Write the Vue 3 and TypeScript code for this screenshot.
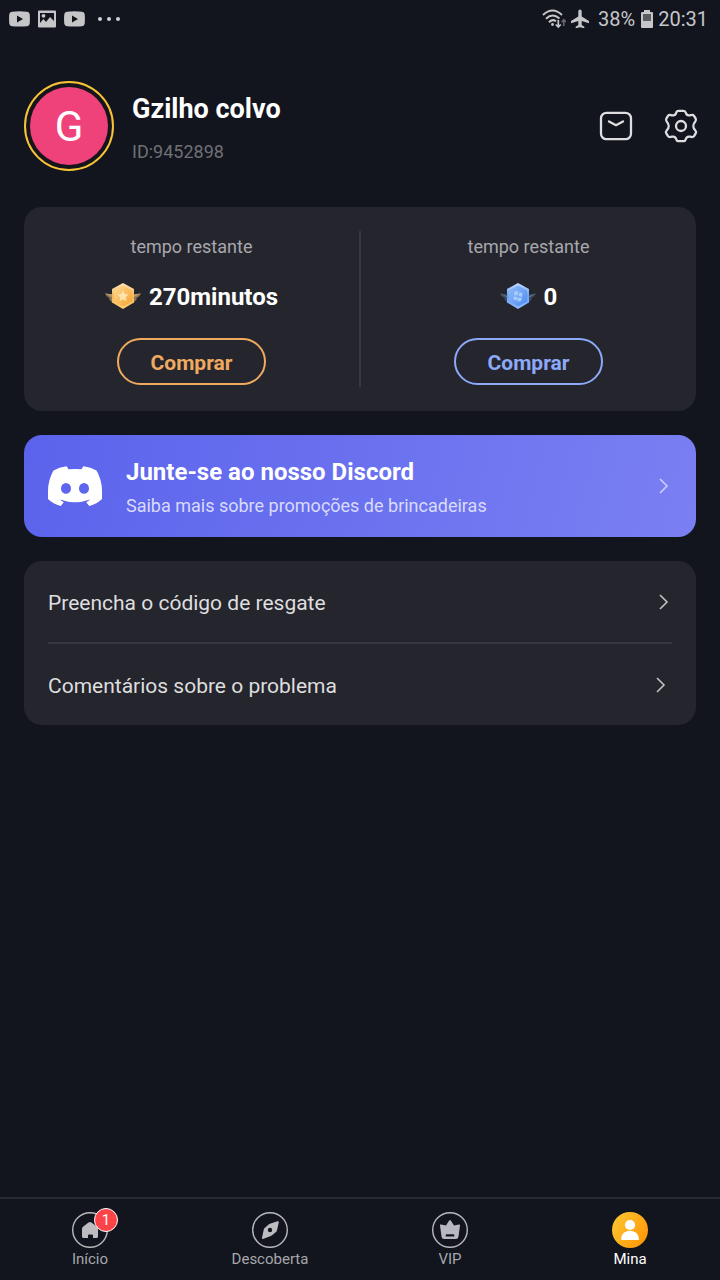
<script setup lang="ts">
interface Balance {
  id: string
  amount: string
  tone: 'gold' | 'blue'
}
interface Tab {
  id: 'home' | 'discover' | 'vip' | 'mine'
  label: string
  badge?: number
}

const balances: Balance[] = [
  { id: 'minutes', amount: '270minutos', tone: 'gold' },
  { id: 'credits', amount: '0', tone: 'blue' },
]

const tabs: Tab[] = [
  { id: 'home', label: 'Início', badge: 1 },
  { id: 'discover', label: 'Descoberta' },
  { id: 'vip', label: 'VIP' },
  { id: 'mine', label: 'Mina' },
]
const activeTab: Tab['id'] = 'mine'
</script>

<template>
  <div class="screen">
    <div class="status">
      <div class="status-left">
        <svg width="21" height="16" viewBox="0 0 21 16"><path fill="#c6c6c9" fill-rule="evenodd" d="M3 .7Q10.500 0 18 .7q2.500.2 2.700 2.500.4 4.800 0 9.500-.3 2.300-2.700 2.500-7.500.6-15 0Q.6 15 .3 12.700q-.5-4.700 0-9.500Q.5 1 3 .7zM8 4.500v7l6-3.500z" /></svg>
        <svg width="18" height="18" viewBox="0 0 18 18"><path fill="#c6c6c9" fill-rule="evenodd" d="M1 .5h16a1 1 0 0 1 1 1v15a1 1 0 0 1-1 1H1a1 1 0 0 1-1-1v-15a1 1 0 0 1 1-1zM2 3v10l3.500-4 2.500 3 4-5 4 4V3z" /><circle cx="5.500" cy="5.800" r="1.900" fill="#c6c6c9" /></svg>
        <svg width="21" height="16" viewBox="0 0 21 16"><path fill="#c6c6c9" fill-rule="evenodd" d="M3 .7Q10.500 0 18 .7q2.500.2 2.700 2.500.4 4.800 0 9.500-.3 2.300-2.700 2.500-7.500.6-15 0Q.6 15 .3 12.700q-.5-4.700 0-9.500Q.5 1 3 .7zM8 4.500v7l6-3.500z" /></svg>
        <svg class="more" width="24" height="6" viewBox="0 0 24 6" fill="#d0d0d3"><circle cx="3" cy="3" r="2" /><circle cx="12" cy="3" r="2" /><circle cx="21" cy="3" r="2" /></svg>
      </div>
      <div class="status-right">
        <svg width="24" height="20" viewBox="0 0 24 20" fill="none" stroke="#c6c6c9" stroke-width="2">
          <path d="M1 6Q10.500-3 20 6M4 9.700Q10.500 3.500 17.500 9.500M7 13.200q3.500-3.500 7-1" />
          <circle cx="10.500" cy="15.500" r="1.400" fill="#c6c6c9" stroke="none" />
          <path d="M16.300 11v7M13.800 15.500l2.500 2.500 2.500-2.500" stroke-width="1.700" />
          <path d="M21.800 17v-6M19.700 13l2.100-2.200 2.100 2.200" stroke="#65656a" stroke-width="1.700" />
        </svg>
        <svg width="20" height="20" viewBox="0 0 20 20"><path fill="#c6c6c9" d="M10 .5q1.600 0 1.700 2v5l7.300 4.500v2.300L11.700 12v4l2.600 1.700v1.500L10 18.200l-4.300 1v-1.500L8.300 16v-4L1 14.300V12l7.300-4.500v-5Q8.400.5 10 .5z" /></svg>
        <span class="pct">38%</span>
        <svg class="battery" width="12" height="18" viewBox="0 0 12 18"><path fill="#c6c6c9" d="M3 0h6v2h2a1 1 0 0 1 1 1v14a1 1 0 0 1-1 1H1a1 1 0 0 1-1-1V3a1 1 0 0 1 1-1h2z" /><path fill="#5b5b62" d="M2 4h8v7H2z" /></svg>
        <span>20:31</span>
      </div>
    </div>

    <header class="profile">
      <div class="avatar"><span>G</span></div>
      <div class="who">
        <h1>Gzilho colvo</h1>
        <p>ID:9452898</p>
      </div>
      <button class="icon-btn" type="button" aria-label="Mensagens">
        <svg width="34" height="34" viewBox="0 0 34 34" fill="none" stroke="#dedee0" stroke-width="2.300" stroke-linecap="round" stroke-linejoin="round"><rect x="2" y="3.800" width="30" height="26.400" rx="5.500" /><path d="M10 12.400l7 3.800 7-3.800" /></svg>
      </button>
      <button class="icon-btn" type="button" aria-label="Configurações">
        <svg width="34" height="34" viewBox="0 0 34 34" fill="none" stroke="#dedee0" stroke-width="2.300" stroke-linejoin="round">
          <path d="M14.500 1.900H19.500Q21.300 1.900 21.800 3.800Q22.600 7 26 6.300Q29 5.300 30 6.800L31.700 9.700Q32.500 11.300 31.200 12.700C28.700 15.300 28.700 18.700 31.200 21.300Q32.500 22.700 31.700 24.300L30 27.200Q29 28.700 26 27.700Q22.600 27 21.800 30.200Q21.300 32.100 19.500 32.100H14.500Q12.700 32.100 12.200 30.200Q11.400 27 8 27.700Q5 28.700 4 27.200L2.300 24.300Q1.500 22.700 2.800 21.300C5.300 18.700 5.300 15.300 2.800 12.700Q1.500 11.300 2.300 9.700L4 6.800Q5 5.300 8 6.300Q11.400 7 12.200 3.800Q12.700 1.900 14.500 1.900Z" />
          <circle cx="17" cy="17" r="5" />
        </svg>
      </button>
    </header>

    <main>
      <section class="balances">
        <div v-for="b in balances" :key="b.id" class="balance" :class="b.tone">
          <p class="caption">tempo restante</p>
          <div class="amount">
            <svg v-if="b.tone === 'gold'" width="36" height="26" viewBox="0 0 36 26">
              <defs>
                <linearGradient id="goldFace" x1="0" y1="0" x2="1" y2="1"><stop offset="0" stop-color="#ffdb94" /><stop offset="1" stop-color="#f5a22f" /></linearGradient>
                <linearGradient id="goldEdge" x1="0" y1="0" x2="0" y2="1"><stop offset="0" stop-color="#ffe7b8" /><stop offset=".5" stop-color="#f3b65c" /><stop offset="1" stop-color="#ffcf70" /></linearGradient>
              </defs>
              <path fill="#8f7552" d="M0 10.500l8 1v9l-4-4.500 1-.5-3.500-2.500zM36 10.500l-8 1v9l4-4.500-1-.5 3.500-2.500z" />
              <path fill="#c09a66" d="M0 10.500l8 1v3zM36 10.500l-8 1v3z" />
              <path fill="url(#goldEdge)" d="M18 0l11 6v13.500L18 26 7 19.500V6z" />
              <path fill="url(#goldFace)" d="M18 2.500l9 5V18.500l-9 5-9-5v-11z" />
              <path fill="#ffe4b0" d="M18 7.500l1.700 3.500 3.800.5-2.800 2.700.7 3.800-3.400-1.800-3.400 1.800.7-3.800-2.800-2.700 3.800-.5z" />
            </svg>
            <svg v-else width="36" height="26" viewBox="0 0 36 26">
              <defs>
                <linearGradient id="blueFace" x1="0" y1="0" x2="1" y2="1"><stop offset="0" stop-color="#91bdf8" /><stop offset="1" stop-color="#4d8df0" /></linearGradient>
                <linearGradient id="blueEdge" x1="0" y1="0" x2="0" y2="1"><stop offset="0" stop-color="#c4dcff" /><stop offset=".5" stop-color="#6ba2f2" /><stop offset="1" stop-color="#91c0ff" /></linearGradient>
              </defs>
              <path fill="#3d4a60" d="M0 10.500l8 1v9l-4-4.500 1-.5-3.500-2.500zM36 10.500l-8 1v9l4-4.500-1-.5 3.500-2.500z" />
              <path fill="#66788f" d="M0 10.500l8 3v1.500zM36 10.500l-8 3v1.500z" />
              <path fill="url(#blueEdge)" d="M18 0l11 6v13.500L18 26 7 19.500V6z" />
              <path fill="url(#blueFace)" d="M18 2.500l9 5V18.500l-9 5-9-5v-11z" />
              <path fill="#a8cbff" d="M14.500 8.500l3.500-.5v4l-4 .5zM19 9.500l3.500.5-.5 4-3.500-1zM13.500 13.500l4 .5-.5 3.500-3.500-1zM18 14.500l4 .5-1 3-3.500.5z" />
            </svg>
            <strong>{{ b.amount }}</strong>
          </div>
          <button type="button" class="buy">Comprar</button>
        </div>
      </section>

      <a class="discord" href="#discord">
        <svg class="logo" width="54" height="40" viewBox="0 0 54 40"><path fill="#fff" fill-rule="evenodd" d="M18.700.2L20.500 3.300Q27 2.500 33.500 3.300L35.300.2Q43 1.200 48.500 4.500Q54 14 54 25V33Q49 38 41.300 40L38.200 36.200Q40.500 35 42 33.500Q27 39 12 33.500Q13.500 35 15.800 36.200L12.700 40Q5 38 0 33V25Q0 14 5.500 4.500Q11 1.200 18.700.2zM18 17a5 5.400 0 1 0 0 10.800a5 5.400 0 1 0 0-10.800zM36 17a5 5.400 0 1 0 0 10.800a5 5.400 0 1 0 0-10.800z" /></svg>
        <span class="discord-text">
          <strong>Junte-se ao nosso Discord</strong>
          <span>Saiba mais sobre promoções de brincadeiras</span>
        </span>
        <svg class="chev" width="10" height="16" viewBox="0 0 10 16" stroke-width="1.600"><path d="M1 1l7 7-7 7" /></svg>
      </a>

      <nav class="links">
        <a href="#resgate"><span>Preencha o código de resgate</span><svg class="chev" width="10" height="16" viewBox="0 0 10 16" stroke-width="1.600"><path d="M1 1l7 7-7 7" /></svg></a>
        <a href="#comentarios"><span>Comentários sobre o problema</span><svg class="chev" width="10" height="16" viewBox="0 0 10 16" stroke-width="1.600"><path d="M1 1l7 7-7 7" /></svg></a>
      </nav>
    </main>

    <nav class="tabs">
      <button v-for="t in tabs" :key="t.id" type="button" class="tab" :class="{ active: t.id === activeTab }">
        <span class="tab-icon">
          <svg width="36" height="36" viewBox="0 0 36 36">
            <defs><linearGradient id="sun" x1="0" y1=".2" x2="1" y2=".8"><stop offset="0" stop-color="#ffc52f" /><stop offset="1" stop-color="#ff9607" /></linearGradient></defs>
            <circle v-if="t.id !== 'mine'" cx="18" cy="18" r="17.300" fill="none" stroke="#b8b8bc" stroke-width="1.400" />
            <path v-if="t.id === 'home'" fill="#bcbcc1" d="M16.500 10.500q1.500-1.200 3 0l5.500 4.300q1 .8 1 2V24.500q0 1.500-1.500 1.500H21v-2.500q0-1-1-1h-3q-1 0-1 1V26h-4.500Q10 26 10 24.500v-7.700q0-1.200 1-2z" />
            <path v-if="t.id === 'discover'" fill="#bcbcc1" fill-rule="evenodd" d="M25.500 9.200q1.500-.3 1.300 1.200L25 18.200q-.3 1.300-1.300 2l-3.300 2.900q-.7.5-1.600.8l-7.300 2.800q-1.800.7-1.500-1l1.700-7.900q.3-1.300 1.300-2l3.300-3.100q.7-.6 1.600-1zM18 15.800a2.200 2.200 0 1 0 0 4.400a2.200 2.200 0 1 0 0-4.400z" />
            <path v-if="t.id === 'vip'" fill="#b8b8c2" fill-rule="evenodd" d="M17.200 8.500q.8-1 1.600 0l3.200 5 5-1.100q1.300-.2 1 1.200L26.500 24.500q-.4 2.500-2.500 2.500H12q-2.100 0-2.500-2.500L8 13.600q-.3-1.400 1-1.200l5 1.100zM14.800 22.200a1.200 1.200 0 0 0 0 2.400h6.400a1.200 1.200 0 0 0 0-2.400z" />
            <g v-if="t.id === 'mine'"><circle cx="18" cy="18" r="18" fill="url(#sun)" /><circle cx="18" cy="13" r="5.100" fill="#fff" /><path fill="#fff" d="M9.200 28q-.3-5 3-7.500Q15 18.800 18 18.800t5.800 1.700q3.300 2.500 3 7.500z" /></g>
          </svg>
          <span v-if="t.badge" class="badge">{{ t.badge }}</span>
        </span>
        <span>{{ t.label }}</span>
      </button>
    </nav>
  </div>
</template>

<style>
body {
  margin: 0;
  background: #12151e;
}
</style>

<style scoped>
.screen {
  min-height: 100vh;
  display: flex;
  flex-direction: column;
  background: #12151e;
  color: #fff;
  font-family: Roboto, "Liberation Sans", sans-serif;
}
.screen * { box-sizing: border-box; }
h1, p { margin: 0; }
svg { display: block; flex: none; }
button {
  font: inherit;
  color: inherit;
  background: none;
  border: 0;
  padding: 0;
}
a { color: inherit; text-decoration: none; }

.status {
  display: flex;
  justify-content: space-between;
  align-items: center;
  height: 37px;
  padding: 0 12px 0 9px;
}
.status-left, .status-right { display: flex; align-items: center; }
.status-left { gap: 8px; }
.more { margin-left: 4px; }
.status-right {
  gap: 4px;
  font-size: 20px;
  line-height: 24px;
  color: #c6c6c9;
}
.pct { margin: 0 2px 0 4px; }
.battery { margin-right: 1px; }

.profile {
  display: flex;
  align-items: center;
  gap: 31px;
  padding: 44px 22px 36px 24px;
}
.avatar {
  width: 90px;
  height: 90px;
  padding: 4px;
  border: 2px solid #f6c436;
  border-radius: 50%;
  background: #17151c;
}
.avatar span {
  display: flex;
  align-items: center;
  justify-content: center;
  height: 100%;
  border-radius: 50%;
  background: #ef427b;
  font-size: 42px;
}
.who {
  flex: 1;
  margin-left: -13px;
  padding-top: 3px;
}
h1 {
  font-size: 27px;
  line-height: 36px;
  font-weight: 700;
}
.who p {
  margin-top: 13px;
  font-size: 18px;
  line-height: 24px;
  color: #6e7075;
}

main {
  flex: 1;
  display: flex;
  flex-direction: column;
  gap: 24px;
  padding: 0 24px 24px;
}
.balances {
  display: flex;
  padding: 24px 0;
  border-radius: 18px;
  background: #25252e;
}
.balance {
  flex: 1;
  display: flex;
  flex-direction: column;
  align-items: center;
  padding-bottom: 2px;
}
.balance + .balance { border-left: 2px solid #373740; }
.caption {
  margin-top: 4px;
  font-size: 18px;
  line-height: 24px;
  color: #a8a8ad;
}
.amount {
  display: flex;
  align-items: center;
  gap: 8px;
  margin: 20px 0 25px;
  font-size: 24px;
  line-height: 32px;
}
.amount strong { padding-top: 2px; }
.buy {
  width: 149px;
  height: 47px;
  padding-top: 2px;
  border: 2px solid;
  border-radius: 24px;
  font-size: 21px;
  font-weight: 700;
}
.gold .buy { color: #efaa5f; }
.blue .buy { color: #8caaf8; }

.discord {
  display: flex;
  align-items: center;
  min-height: 102px;
  padding: 0 27px 0 24px;
  border-radius: 18px;
  background: linear-gradient(105deg, #5b63ec, #7a80f2);
}
.discord-text {
  flex: 1;
  display: flex;
  flex-direction: column;
  gap: 6px;
  margin-left: 24px;
  padding-top: 2px;
  font-size: 18px;
  line-height: 24px;
  color: #d9dbfb;
}
.discord-text strong {
  font-size: 24px;
  line-height: 32px;
  color: #fff;
}
.chev path {
  fill: none;
  stroke: #c0c0c4;
}
.discord .chev path { stroke: #cbd0ff; }

.links {
  padding: 0 24px;
  border-radius: 18px;
  background: #25252e;
}
.links a {
  display: flex;
  align-items: center;
  justify-content: space-between;
  height: 81px;
  padding-right: 3px;
  font-size: 21px;
  color: #dededf;
}
.links a + a {
  height: 83px;
  padding-right: 6px;
  border-top: 2px solid #373740;
}
.links span { padding-top: 2px; }

.tabs {
  display: grid;
  grid-template-columns: repeat(4, 1fr);
  height: 83px;
  border-top: 2px solid #292b34;
}
.tab {
  display: flex;
  flex-direction: column;
  align-items: center;
  gap: 2px;
  padding-top: 13px;
  font-size: 15px;
  line-height: 18px;
  color: #a6a7ab;
}
.tab.active { color: #fff; }
.tab-icon { position: relative; }
.badge {
  position: absolute;
  top: -4px;
  right: -10px;
  width: 24px;
  height: 24px;
  border: 1px solid #fff;
  border-radius: 50%;
  background: #fb4448;
  color: #fff;
  font-size: 15px;
  line-height: 22px;
  text-align: center;
}
</style>
